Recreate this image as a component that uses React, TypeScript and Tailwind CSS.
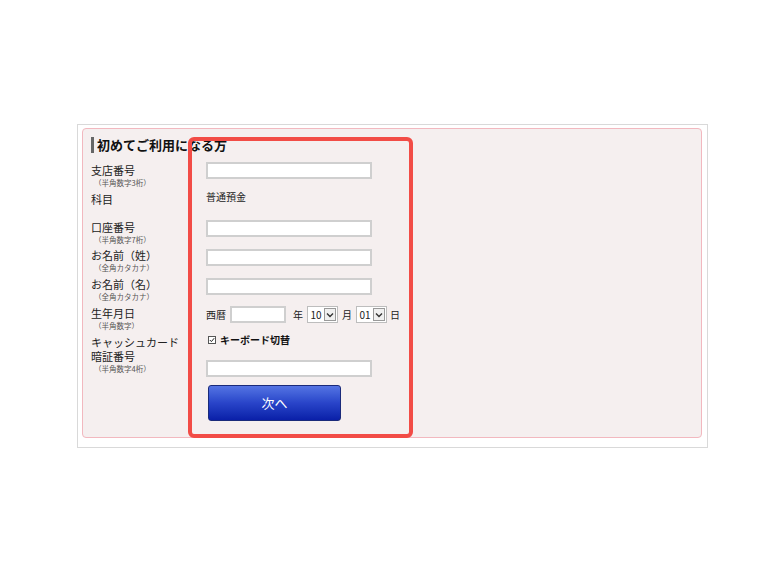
const jp = { fontFamily: '"Noto Sans CJK JP", "Noto Sans", sans-serif' };

function TextBox({ w = "w-[166px]" }: { w?: string }) {
  return <div className={`${w} h-[17px] border-2 border-[#cfcfcf] bg-white`} />;
}

function Select({ value }: { value: string }) {
  return (
    <div className="flex h-[17px] w-[31px] items-stretch border border-[#bdbdbd] bg-white">
      <div className="flex flex-1 items-center justify-center text-[10px] leading-none text-[#222]">{value}</div>
      <div className="my-[1px] mr-[1px] flex w-[12px] items-center justify-center border border-[#9a9a9a] bg-[#f0f0f0]">
        <svg width="8" height="6" viewBox="0 0 8 6">
          <path d="M1 1.5 L4 4.5 L7 1.5" fill="none" stroke="#333" strokeWidth="1.4" />
        </svg>
      </div>
    </div>
  );
}

function Label({ main, sub }: { main: string[]; sub?: string }) {
  return (
    <div className="w-[115px] shrink-0">
      <div className="text-[11px] leading-[14px] text-[#222]">
        {main.map((m, i) => (
          <span key={m}>
            {i > 0 && <br />}
            {m}
          </span>
        ))}
      </div>
      {sub && <div className="mt-[1px] pl-[3px] text-[7.5px] leading-[9px] text-[#555]">{sub}</div>}
    </div>
  );
}

export default function App() {
  return (
    <div className="min-h-[570px] w-[780px] bg-white pt-[124px] pl-[77px]" style={jp}>
      <div className="relative w-[631px] border border-[#d9d9d9] pt-[3px] pr-[5px] pb-[9px] pl-[4px]">
        <div className="h-[310px] w-[620px] rounded-[4px] border border-[#f2b8bf] bg-[#f5efef] pt-[7px] pl-[8px]">
          <div className="flex items-center gap-[3px]">
            <div className="h-[16px] w-[3px] bg-[#666]" />
            <div className="text-[13px] leading-[17px] font-bold text-[#111]">初めてご利用になる方</div>
          </div>

          <div className="mt-[9px] flex h-[29px]">
            <div className="pt-[1px]">
              <Label main={["支店番号"]} sub="（半角数字3桁）" />
            </div>
            <TextBox />
          </div>

          <div className="flex h-[29px]">
            <div className="pt-[1px]">
              <Label main={["科目"]} />
            </div>
            <div className="text-[10px] leading-[12px] text-[#222]">普通預金</div>
          </div>

          <div className="flex h-[29px]">
            <div>
              <Label main={["口座番号"]} sub="（半角数字7桁）" />
            </div>
            <TextBox />
          </div>

          <div className="flex h-[29px]">
            <div className="-mt-[1px]">
              <Label main={["お名前（姓）"]} sub="（全角カタカナ）" />
            </div>
            <TextBox />
          </div>

          <div className="flex h-[28px]">
            <div className="-mt-[1px]">
              <Label main={["お名前（名）"]} sub="（全角カタカナ）" />
            </div>
            <TextBox />
          </div>

          <div className="flex h-[29px]">
            <div>
              <Label main={["生年月日"]} sub="（半角数字）" />
            </div>
            <div className="flex h-[17px] items-center text-[10px] leading-none text-[#222]">
              <span className="w-[24px]">西暦</span>
              <TextBox w="w-[56px]" />
              <span className="ml-[7px] w-[14px]">年</span>
              <Select value="10" />
              <span className="ml-[4px] w-[14px]">月</span>
              <Select value="01" />
              <span className="ml-[3px]">日</span>
            </div>
          </div>

          <div className="flex">
            <div>
              <Label main={["キャッシュカード", "暗証番号"]} sub="（半角数字4桁）" />
            </div>
            <div>
              <div className="flex h-[25px] items-start gap-[4px] pt-[1px] pl-[2px]">
                <div className="flex h-[8px] w-[8px] items-center justify-center border border-[#555] bg-white">
                  <svg width="6" height="6" viewBox="0 0 6 6">
                    <path d="M0.8 3 L2.4 4.6 L5.2 1.2" fill="none" stroke="#222" strokeWidth="1" />
                  </svg>
                </div>
                <span className="-mt-[1px] text-[10px] leading-[10px] font-bold text-[#111]">キーボード切替</span>
              </div>
              <TextBox />
              <button className="mt-[8px] ml-[2px] h-[36px] w-[133px] rounded-[3px] border border-[#1a2a7a] bg-gradient-to-b from-[#5574e3] via-[#2944c9] to-[#0a1fa8] text-[13px] text-white">
                次へ
              </button>
            </div>
          </div>
        </div>

        <div className="absolute top-[12px] left-[110px] h-[301px] w-[225px] rounded-[6px] border-4 border-[#f24c46]" />
      </div>
    </div>
  );
}
